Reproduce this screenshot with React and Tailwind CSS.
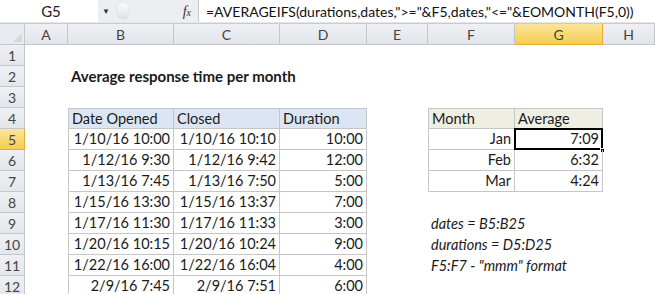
import React from "react";

const cols = [
  { key: "A", w: "w-[43px]" },
  { key: "B", w: "w-[106px]" },
  { key: "C", w: "w-[106px]" },
  { key: "D", w: "w-[87px]" },
  { key: "E", w: "w-[61px]" },
  { key: "F", w: "w-[87px]" },
  { key: "G", w: "w-[88px]" },
  { key: "H", w: "flex-1" },
];

const rows = [
  ["1/10/16 10:00", "1/10/16 10:10", "10:00"],
  ["1/12/16 9:30", "1/12/16 9:42", "12:00"],
  ["1/13/16 7:45", "1/13/16 7:50", "5:00"],
  ["1/15/16 13:30", "1/15/16 13:37", "7:00"],
  ["1/17/16 11:30", "1/17/16 11:33", "3:00"],
  ["1/20/16 10:15", "1/20/16 10:24", "9:00"],
  ["1/22/16 16:00", "1/22/16 16:04", "4:00"],
  ["2/9/16 7:45", "2/9/16 7:51", "6:00"],
];

const averages = [
  ["Jan", "7:09"],
  ["Feb", "6:32"],
  ["Mar", "4:24"],
];

const notes = {
  9: "dates = B5:B25",
  10: "durations = D5:D25",
  11: 'F5:F7 - "mmm" format',
};

const line = "border-[#c6c6c6]";

// returns { text, cls } for one cell
const getCell = (r, c) => {
  const base = "h-full flex items-center whitespace-nowrap px-[3px]";
  if (r === 2 && c === "B")
    return { text: "Average response time per month", cls: `${base} font-bold text-[15px] overflow-visible` };

  // first table
  if (r === 4 && ["B", "C", "D"].includes(c)) {
    const label = { B: "Date Opened", C: "Closed", D: "Duration" }[c];
    return {
      text: label,
      cls: `${base} bg-[#dce5f3] border-t border-r border-b ${line} ${c === "B" ? "border-l" : ""}`,
    };
  }
  if (r >= 5 && ["B", "C", "D"].includes(c)) {
    const i = { B: 0, C: 1, D: 2 }[c];
    return {
      text: rows[r - 5][i],
      cls: `${base} justify-end bg-white border-r border-b ${line} ${c === "B" ? "border-l" : ""}`,
    };
  }

  // second table
  if (r === 4 && (c === "F" || c === "G")) {
    return {
      text: c === "F" ? "Month" : "Average",
      cls: `${base} bg-[#eeeee2] border-t border-r border-b ${line} ${c === "F" ? "border-l" : ""}`,
    };
  }
  if (r >= 5 && r <= 7 && (c === "F" || c === "G")) {
    return {
      text: averages[r - 5][c === "F" ? 0 : 1],
      cls: `${base} justify-end border-r border-b ${line} ${c === "F" ? "border-l" : ""}`,
      selected: r === 5 && c === "G",
    };
  }

  if (c === "F" && notes[r]) return { text: notes[r], cls: `${base} italic` };
  return { text: "", cls: base };
};

const FormulaBar = () => (
  <div className="h-[24px] flex bg-[#e3e6ea] border-b border-[#c8ccd2]">
    <div className="w-[98px] h-[22px] bg-white flex items-center justify-center text-[15px] text-[#222] pl-[4px]">
      G5
    </div>
    <div className="w-[100px] h-[22px] flex items-center bg-[#eceef1]">
      <span className="text-[8px] text-[#333] ml-[4px]">▼</span>
      <div className="ml-[6px] w-[14px] h-[18px] rounded-full bg-gradient-to-b from-[#ffffff] to-[#d9dcdf] border border-[#e2e4e7] opacity-80" />
      <span
        className="ml-auto mr-[7px] italic text-[14px] text-[#333]"
        style={{ fontFamily: "'Liberation Serif', serif" }}
      >
        f<span className="text-[10px]">x</span>
      </span>
    </div>
    <div className="flex-1 h-[22px] bg-white border-l border-[#c8ccd2] flex items-center pl-[7px] text-[14px] text-[#111] whitespace-nowrap overflow-hidden">
      =AVERAGEIFS(durations,dates,"&gt;="&amp;F5,dates,"&lt;="&amp;EOMONTH(F5,0))
    </div>
  </div>
);

const App = () => {
  return (
    <div
      className="w-[655px] h-[294px] overflow-hidden bg-white text-[#1a1a1a]"
      style={{ fontFamily: "Lato, 'Liberation Sans', sans-serif" }}
    >
      <FormulaBar />

      {/* column headers */}
      <div className="flex h-[21px] text-[14px] text-[#444]">
        <div className="w-[25px] h-full bg-[#e8ebef] border-r border-b border-[#c2c7ce] flex items-end justify-end p-[2px]">
          <div className="w-0 h-0 border-l-[9px] border-l-transparent border-b-[9px] border-b-[#d3d6da]" />
        </div>
        {cols.map((col) => (
          <div
            key={col.key}
            className={`${col.w} h-full flex items-center justify-center border-r border-b ${
              col.key === "G"
                ? "bg-gradient-to-b from-[#fbe59a] to-[#f5cd4e] border-[#e5ac2e]"
                : "bg-gradient-to-b from-[#eef0f3] to-[#e1e5ea] border-[#c2c7ce]"
            }`}
          >
            {col.key}
          </div>
        ))}
      </div>

      {/* rows */}
      {Array.from({ length: 12 }, (_, i) => i + 1).map((r) => (
        <div key={r} className="flex h-[21px] text-[14.5px]">
          <div
            className={`w-[25px] h-full flex items-center justify-center text-[14px] text-[#444] border-r border-b ${
              r === 5
                ? "bg-gradient-to-b from-[#fbe59a] to-[#f5cd4e] border-[#e5ac2e]"
                : "bg-gradient-to-b from-[#eef0f3] to-[#e3e7ec] border-[#c2c7ce]"
            }`}
          >
            {r}
          </div>
          {cols.map((col) => {
            const cell = getCell(r, col.key);
            return (
              <div key={col.key} className={`${col.w} h-full relative`}>
                <div className={cell.cls}>{cell.text}</div>
                {cell.selected && (
                  <>
                    <div className="absolute -left-[1px] -top-[1px] right-0 bottom-0 border-2 border-black" />
                    <div className="absolute -right-[2px] -bottom-[3px] w-[5px] h-[5px] bg-black border border-white" />
                  </>
                )}
              </div>
            );
          })}
        </div>
      ))}
    </div>
  );
};

export default App;
